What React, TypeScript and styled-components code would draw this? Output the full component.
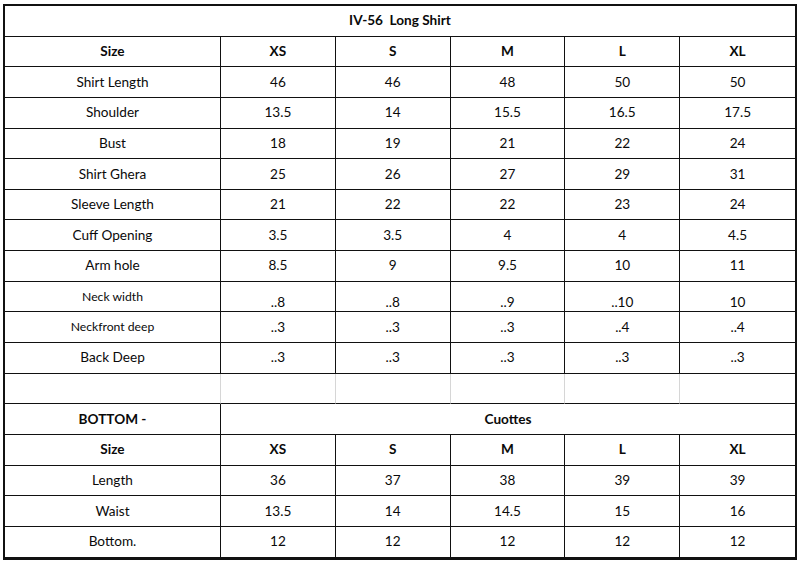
import React from "react";
import styled, { createGlobalStyle, css } from "styled-components";

const Global = createGlobalStyle`
  html, body { margin: 0; padding: 0; background: #ffffff; }
  body { font-family: "Lato", "Open Sans", "Liberation Sans", sans-serif; color: #000; }
`;

const Page = styled.div`
  width: 800px;
  height: 562px;
  box-sizing: border-box;
  padding: 4px 3px 0 3px;
  background: #fff;
`;

const Sheet = styled.div`
  display: grid;
  grid-template-columns: 216px repeat(5, 1fr);
  grid-auto-rows: 30.65px;
  width: 794px;
  box-sizing: border-box;
  border: 2px solid #111;
`;

type CellProps = {
  $span?: number;
  $bold?: boolean;
  $small?: boolean;
  $blank?: boolean;
  $bottom?: boolean;
  $lastCol?: boolean;
};

const Cell = styled.div<CellProps>`
  box-sizing: border-box;
  display: flex;
  align-items: ${(p) => (p.$bottom ? "flex-end" : "center")};
  justify-content: center;
  padding-bottom: ${(p) => (p.$bottom ? "1px" : "1px")};
  border-right: 1px solid ${(p) => (p.$blank ? "#d6d6d6" : "#111")};
  border-bottom: 1px solid #111;
  font-size: ${(p) => (p.$small ? "12.2px" : "13.6px")};
  font-weight: ${(p) => (p.$bold ? 700 : 400)};
  color: #0a0a0a;
  white-space: pre;
  ${(p) =>
    p.$span &&
    css`
      grid-column: span ${p.$span};
    `}
  ${(p) =>
    p.$lastCol &&
    css`
      border-right: none;
    `}
`;

const sizes = ["XS", "S", "M", "L", "XL"];

type Row = { label: string; values: string[]; small?: boolean; bottomVals?: boolean };

const shirtRows: Row[] = [
  { label: "Shirt Length", values: ["46", "46", "48", "50", "50"] },
  { label: "Shoulder", values: ["13.5", "14", "15.5", "16.5", "17.5"] },
  { label: "Bust", values: ["18", "19", "21", "22", "24"] },
  { label: "Shirt Ghera", values: ["25", "26", "27", "29", "31"] },
  { label: "Sleeve Length", values: ["21", "22", "22", "23", "24"] },
  { label: "Cuff Opening", values: ["3.5", "3.5", "4", "4", "4.5"] },
  { label: "Arm hole", values: ["8.5", "9", "9.5", "10", "11"] },
  { label: "Neck width", values: ["..8", "..8", "..9", "..10", "10"], small: true, bottomVals: true },
  { label: "Neckfront deep", values: ["..3", "..3", "..3", "..4", "..4"], small: true },
  { label: "Back Deep", values: ["..3", "..3", "..3", "..3", "..3"] },
];

const bottomRows: Row[] = [
  { label: "Length", values: ["36", "37", "38", "39", "39"] },
  { label: "Waist", values: ["13.5", "14", "14.5", "15", "16"] },
  { label: "Bottom.", values: ["12", "12", "12", "12", "12"] },
];

const SizeHeader = () => (
  <>
    <Cell $bold>Size</Cell>
    {sizes.map((s, i) => (
      <Cell key={s} $bold $lastCol={i === 4}>
        {s}
      </Cell>
    ))}
  </>
);

const DataRow = ({ row }: { row: Row }) => (
  <>
    <Cell $small={row.small}>{row.label}</Cell>
    {row.values.map((v, i) => (
      <Cell key={i} $bottom={row.bottomVals} $lastCol={i === 4}>
        {v}
      </Cell>
    ))}
  </>
);

export default function App() {
  return (
    <>
      <Global />
      <Page>
        <Sheet>
          <Cell $span={6} $bold $lastCol>
            {"IV-56  Long Shirt"}
          </Cell>
          <SizeHeader />
          {shirtRows.map((r) => (
            <DataRow key={r.label} row={r} />
          ))}
          {Array.from({ length: 6 }).map((_, i) => (
            <Cell key={`b${i}`} $blank $lastCol={i === 5} />
          ))}
          <Cell $bold>BOTTOM -</Cell>
          <Cell $span={5} $bold $lastCol>
            Cuottes
          </Cell>
          <SizeHeader />
          {bottomRows.map((r) => (
            <DataRow key={r.label} row={r} />
          ))}
        </Sheet>
      </Page>
    </>
  );
}
